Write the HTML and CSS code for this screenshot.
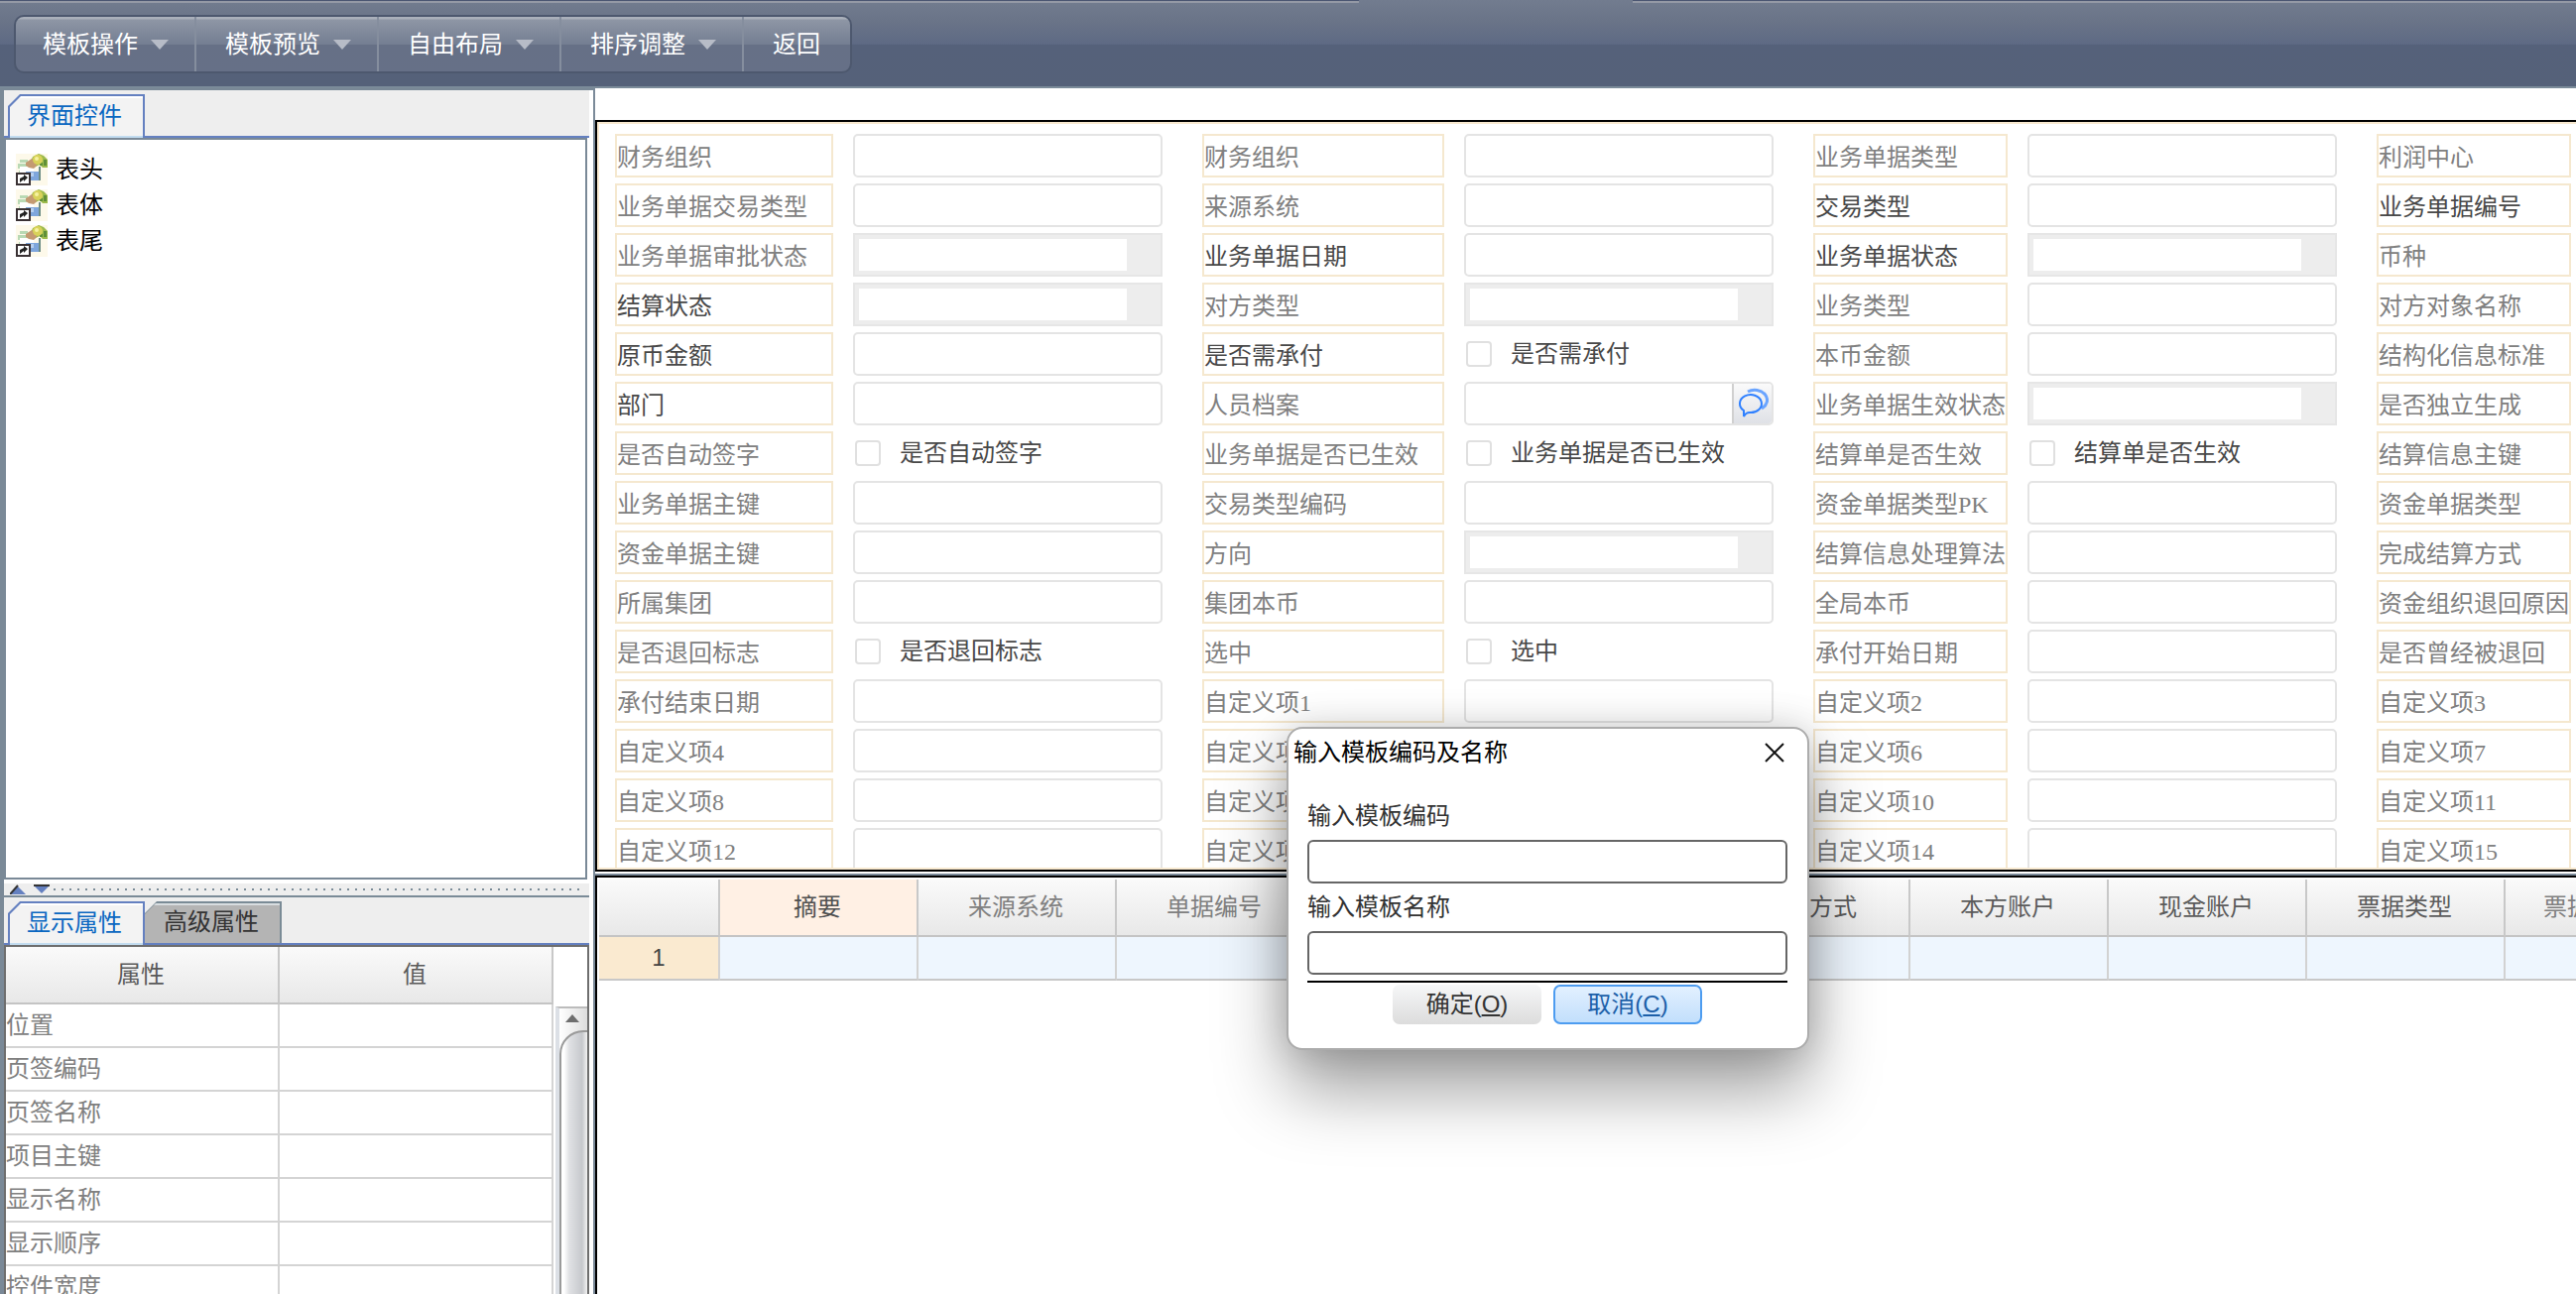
FILE: index.html
```
<!DOCTYPE html>
<html lang="zh-CN">
<head>
<meta charset="utf-8">
<title>模板设置</title>
<link rel="stylesheet" href="styles.css">
</head>
<body>
<svg width="0" height="0" class="sprite" aria-hidden="true">
  <symbol id="node" viewBox="0 0 32 32">
    <rect width="32" height="32" fill="#fdf9ea"/>
    <path d="M4 6h8v3H4zM2 10h10v5H2zM3 17h8v3H3z" fill="#b9d9b4"/>
    <path d="M4 13h14v6H4z" fill="#fff"/>
    <path d="M17 3l6-3 5 2 4 4v8h-5l-3-3-6 3-4-4z" fill="#9dbb4c"/>
    <path d="M28 6h3v6h-3zM24 9h3v3h-3z" fill="#5f8f38"/>
    <path d="M10 9l6-4 4 4 1 3-3 3-5-1-3-2z" fill="#c49a72"/>
    <circle cx="22" cy="6" r="5" fill="#d9d25a"/>
    <circle cx="21" cy="5" r="2" fill="#f6f3a0"/>
    <path d="M10 18h14v9H10z" fill="#7ea6dc"/>
    <path d="M11 19h7v4h-7z" fill="#b7d0f0"/>
    <path d="M24 13v14" stroke="#6d8d86" stroke-width="2"/>
    <path d="M1 20h13v11H1z" fill="#fff" stroke="#3a3234" stroke-width="2"/>
    <path d="M4 29v-4l4-2v-2l4 3-4 4v-2z" fill="#222"/>
  </symbol>
</svg>

<header class="topbar">
  <nav class="menu">
    <button type="button">模板操作<i class="caret"></i></button>
    <button type="button">模板预览<i class="caret"></i></button>
    <button type="button">自由布局<i class="caret"></i></button>
    <button type="button">排序调整<i class="caret"></i></button>
    <button type="button" class="back">返回</button>
  </nav>
</header>

<main class="workspace">
  <aside class="side">
    <section class="pane">
      <div class="tabs"><button type="button" class="tab active"><span>界面控件</span></button></div>
      <ul class="tree">
        <li><svg class="node"><use href="#node"/></svg>表头</li>
        <li><svg class="node"><use href="#node"/></svg>表体</li>
        <li><svg class="node"><use href="#node"/></svg>表尾</li>
      </ul>
    </section>
    <div class="splitter">
      <svg width="44" height="10" viewBox="0 0 44 10"><path d="M0 10l8-8 8 8z" fill="#6480c0"/><path d="M0 10l8-9" stroke="#333" stroke-width="2"/><path d="M24 1h16l-8 8z" fill="#6480c0"/><path d="M24 1h16" stroke="#333" stroke-width="2"/></svg>
      <span class="dots"></span>
    </div>
    <section class="pane lower">
      <div class="tabs"><button type="button" class="tab active"><span>显示属性</span></button><button type="button" class="tab idle"><span>高级属性</span></button></div>
      <div class="props">
        <table>
          <thead><tr><th>属性</th><th>值</th></tr></thead>
          <tbody>
            <tr><td>位置</td><td></td></tr>
            <tr><td>页签编码</td><td></td></tr>
            <tr><td>页签名称</td><td></td></tr>
            <tr><td>项目主键</td><td></td></tr>
            <tr><td>显示名称</td><td></td></tr>
            <tr><td>显示顺序</td><td></td></tr>
            <tr><td>控件宽度</td><td></td></tr>
          </tbody>
        </table>
        <div class="scroll"><svg width="28" height="22" viewBox="0 0 28 22"><path d="M6 14l7-8 7 8z" fill="#6e6e6e"/></svg><div class="thumb"></div></div>
      </div>
    </section>
  </aside>

  <div class="design">
    <form class="canvas">
      <div class="fields">
        <div class="pair"><label class="cap" for="a1">财务组织</label><input id="a1" type="text"></div>
        <div class="pair"><label class="cap" for="b1">财务组织</label><input id="b1" type="text"></div>
        <div class="pair"><label class="cap" for="c1">业务单据类型</label><input id="c1" type="text"></div>
        <span class="cap">利润中心</span>

        <div class="pair"><label class="cap" for="a2">业务单据交易类型</label><input id="a2" type="text"></div>
        <div class="pair"><label class="cap" for="b2">来源系统</label><input id="b2" type="text"></div>
        <div class="pair"><label class="cap key" for="c2">交易类型</label><input id="c2" type="text"></div>
        <span class="cap key">业务单据编号</span>

        <div class="pair"><label class="cap" for="a3">业务单据审批状态</label><select id="a3"></select></div>
        <div class="pair"><label class="cap key" for="b3">业务单据日期</label><input id="b3" type="text"></div>
        <div class="pair"><label class="cap key" for="c3">业务单据状态</label><select id="c3"></select></div>
        <span class="cap">币种</span>

        <div class="pair"><label class="cap key" for="a4">结算状态</label><select id="a4"></select></div>
        <div class="pair"><label class="cap" for="b4">对方类型</label><select id="b4"></select></div>
        <div class="pair"><label class="cap" for="c4">业务类型</label><input id="c4" type="text"></div>
        <span class="cap">对方对象名称</span>

        <div class="pair"><label class="cap key" for="a5">原币金额</label><input id="a5" type="text"></div>
        <div class="pair"><span class="cap key">是否需承付</span><label class="check"><input type="checkbox">是否需承付</label></div>
        <div class="pair"><label class="cap" for="c5">本币金额</label><input id="c5" type="text"></div>
        <span class="cap">结构化信息标准</span>

        <div class="pair"><label class="cap key" for="a6">部门</label><input id="a6" type="text"></div>
        <div class="pair"><label class="cap" for="b6">人员档案</label><div class="lookup"><input id="b6" type="text"><button type="button" aria-label="参照"><svg width="32" height="32" viewBox="0 0 32 32" fill="none" stroke="#2f80ff" stroke-width="2"><path d="M11 4a11 9 0 0 1 14 17" stroke="#6ba5ff" stroke-width="3"/><path d="M7 29v-6a11 9 0 1 1 6 2q-4 0-6 4z"/></svg></button></div></div>
        <div class="pair"><label class="cap" for="c6">业务单据生效状态</label><select id="c6"></select></div>
        <span class="cap">是否独立生成</span>

        <div class="pair"><span class="cap">是否自动签字</span><label class="check"><input type="checkbox">是否自动签字</label></div>
        <div class="pair"><span class="cap">业务单据是否已生效</span><label class="check"><input type="checkbox">业务单据是否已生效</label></div>
        <div class="pair"><span class="cap">结算单是否生效</span><label class="check"><input type="checkbox">结算单是否生效</label></div>
        <span class="cap">结算信息主键</span>

        <div class="pair"><label class="cap" for="a8">业务单据主键</label><input id="a8" type="text"></div>
        <div class="pair"><label class="cap" for="b8">交易类型编码</label><input id="b8" type="text"></div>
        <div class="pair"><label class="cap" for="c8">资金单据类型PK</label><input id="c8" type="text"></div>
        <span class="cap">资金单据类型</span>

        <div class="pair"><label class="cap" for="a9">资金单据主键</label><input id="a9" type="text"></div>
        <div class="pair"><label class="cap" for="b9">方向</label><select id="b9"></select></div>
        <div class="pair"><label class="cap" for="c9">结算信息处理算法</label><input id="c9" type="text"></div>
        <span class="cap">完成结算方式</span>

        <div class="pair"><label class="cap" for="a10">所属集团</label><input id="a10" type="text"></div>
        <div class="pair"><label class="cap" for="b10">集团本币</label><input id="b10" type="text"></div>
        <div class="pair"><label class="cap" for="c10">全局本币</label><input id="c10" type="text"></div>
        <span class="cap">资金组织退回原因</span>

        <div class="pair"><span class="cap">是否退回标志</span><label class="check"><input type="checkbox">是否退回标志</label></div>
        <div class="pair"><span class="cap">选中</span><label class="check"><input type="checkbox">选中</label></div>
        <div class="pair"><label class="cap" for="c11">承付开始日期</label><input id="c11" type="text"></div>
        <span class="cap">是否曾经被退回</span>

        <div class="pair"><label class="cap" for="a12">承付结束日期</label><input id="a12" type="text"></div>
        <div class="pair"><label class="cap" for="b12">自定义项1</label><input id="b12" type="text"></div>
        <div class="pair"><label class="cap" for="c12">自定义项2</label><input id="c12" type="text"></div>
        <span class="cap">自定义项3</span>

        <div class="pair"><label class="cap" for="a13">自定义项4</label><input id="a13" type="text"></div>
        <div class="pair"><label class="cap" for="b13">自定义项5</label><input id="b13" type="text"></div>
        <div class="pair"><label class="cap" for="c13">自定义项6</label><input id="c13" type="text"></div>
        <span class="cap">自定义项7</span>

        <div class="pair"><label class="cap" for="a14">自定义项8</label><input id="a14" type="text"></div>
        <div class="pair"><label class="cap" for="b14">自定义项9</label><input id="b14" type="text"></div>
        <div class="pair"><label class="cap" for="c14">自定义项10</label><input id="c14" type="text"></div>
        <span class="cap">自定义项11</span>

        <div class="pair"><label class="cap" for="a15">自定义项12</label><input id="a15" type="text"></div>
        <div class="pair"><label class="cap" for="b15">自定义项13</label><input id="b15" type="text"></div>
        <div class="pair"><label class="cap" for="c15">自定义项14</label><input id="c15" type="text"></div>
        <span class="cap">自定义项15</span>
      </div>
    </form>

    <section class="lines">
      <table>
        <thead><tr><th class="num"></th><th class="picked">摘要</th><th class="dim">来源系统</th><th class="dim">单据编号</th><th></th><th></th><th>结算方式</th><th>本方账户</th><th>现金账户</th><th>票据类型</th><th class="dim">票据到期日</th></tr></thead>
        <tbody><tr><td class="num">1</td><td></td><td></td><td></td><td></td><td></td><td></td><td></td><td></td><td></td><td></td></tr></tbody>
      </table>
    </section>
  </div>
</main>

<div class="dialog" role="dialog" aria-labelledby="dlg-title">
  <div class="dialog-head">
    <h1 id="dlg-title">输入模板编码及名称</h1>
    <button type="button" class="close" aria-label="关闭"><svg width="20" height="20" viewBox="0 0 20 20"><path d="M1 1l18 18M19 1L1 19" stroke="#111" stroke-width="2"/></svg></button>
  </div>
  <form class="dialog-body">
    <label for="code">输入模板编码</label>
    <input id="code" type="text">
    <label for="name">输入模板名称</label>
    <input id="name" type="text">
    <div class="actions">
      <button type="button">确定(<u>O</u>)</button>
      <button type="button" class="focus">取消(<u>C</u>)</button>
    </div>
  </form>
</div>
</body>
</html>
```
FILE: styles.css
```
* { box-sizing: border-box; }

html, body { height: 100%; }

body {
  margin: 0;
  display: flex;
  flex-direction: column;
  overflow: hidden;
  background: #fff;
  color: #4a4a4a;
  font: 24px/32px "Liberation Serif", "Noto Sans CJK SC", sans-serif;
}

button, input, select { margin: 0; padding: 0; font: inherit; color: inherit; border-radius: 0; }
button { border: 0; background: none; white-space: nowrap; }
.sprite { position: absolute; }

/* top bar */
.topbar {
  position: relative;
  flex: none;
  height: 89px;
  padding: 15px 14px;
  border-bottom: 2px solid #7b8b99;
  background: linear-gradient(#727c8f, #6a7488 24%, #5e6a84 51%, #55617a 52%, #556179);
}
.topbar::before, .topbar::after {
  content: "";
  position: absolute;
  top: 0;
  height: 3px;
  background: linear-gradient(#4b5672 0 1px, #9499a5 1px);
}
.topbar::before { left: 0; width: 1370px; }
.topbar::after { left: 1646px; right: 0; }

.menu {
  display: inline-flex;
  height: 59px;
  border: 2px solid #4d586e;
  border-radius: 10px;
  overflow: hidden;
  background: linear-gradient(#aab0bb 0 2px, #8e96a5 3px, #747e92 50%, #667086 51%, #667087);
}
.menu button {
  display: flex;
  align-items: center;
  gap: 13px;
  width: 184px;
  padding-left: 29px;
  color: #fff;
  border-right: 2px solid #858e9e;
}
.menu button:first-child { width: 182px; padding-left: 27px; }
.menu button.back { width: 107px; border-right: 0; }
.caret { border: 9px solid transparent; border-top: 10px solid #b7bcc7; border-bottom: 0; }

.workspace { flex: 1; min-height: 0; display: grid; grid-template-columns: 598px minmax(0, 1fr); }

/* left column */
.side {
  min-height: 0;
  display: grid;
  grid-template-columns: minmax(0, 1fr);
  grid-template-rows: minmax(0, 800fr) 14px minmax(0, 400fr);
  border-left: 4px solid #7a8997;
  border-top: 2px solid #7a8997;
}
.pane { display: flex; flex-direction: column; min-height: 0; margin-right: 4px; padding-bottom: 4px; }
.lower { padding-bottom: 0; }
.tabs {
  flex: none;
  display: flex;
  align-items: flex-end;
  height: 48px;
  padding-left: 4px;
  background: #eee;
  border-bottom: 2px solid #6480c0;
}
.tab {
  position: relative;
  width: 138px;
  height: 44px;
  margin-bottom: -2px;
  padding: 0 4px 0 0;
  color: #0a67c1;
  background: #6480c0;
  clip-path: polygon(12px 0, 100% 0, 100% 100%, 0 100%, 0 12px);
}
.tab::before {
  content: "";
  position: absolute;
  inset: 2px 2px 0 2px;
  background: linear-gradient(#fff 0 2px, #f3f3f3 2px 40px, #c2dcf0 40px);
  clip-path: polygon(11px 0, 100% 0, 100% 100%, 0 100%, 0 11px);
}
.tab span { position: relative; }
.tab.idle { margin-bottom: 0; height: 42px; color: #333; background: #7a8b96; }
.tab.idle::before { background: linear-gradient(#d8dde0 0 2px, #b4b4b4 2px); left: 0; }
.tree {
  flex: 1;
  margin: 0 2px 0 0;
  padding: 12px 10px;
  list-style: none;
  color: #000;
  border: 2px solid #7a8997;
}
.tree li { display: flex; align-items: center; gap: 8px; height: 36px; }
.node { width: 32px; height: 32px; }

.splitter { display: flex; align-items: center; margin-right: 4px; padding: 0 6px; background: #eee; border-bottom: 2px solid #7a8b97; }
.splitter svg { flex: none; }
.dots { flex: 1; height: 2px; background: repeating-linear-gradient(90deg, #7a8b97 0 2px, #eee 2px 8px); }

.props { flex: 1; display: flex; min-height: 0; overflow: hidden; border: 2px solid #6e6e6e; border-bottom: 0; }
table { border-collapse: separate; border-spacing: 0; table-layout: fixed; }
th, td { padding: 0; font-weight: normal; }
.props table { width: 552px; height: max-content; }
.props th {
  height: 58px;
  padding-right: 2px;
  color: #5a5a5a;
  border-right: 2px solid #c8c8c8;
  border-bottom: 2px solid #c4c4c4;
  background: linear-gradient(#fafafa, #e8e8e8);
}
.props td { height: 44px; color: #808080; border-right: 2px solid #d4d4d4; border-bottom: 2px solid #d4d4d4; }
.scroll {
  flex: 1;
  margin: 60px 0 0 2px;
  display: flex;
  flex-direction: column;
  border-top: 2px solid #bcbcbc;
  border-left: 4px solid #dce0e6;
  background: linear-gradient(90deg, #fff, #ddd);
}
.scroll svg { flex: none; }
.thumb { flex: 1; border: 2px solid #9a9a9a; border-right: 0; border-bottom: 0; border-top-left-radius: 24px; background: linear-gradient(90deg, #fff 0 10%, #e0e1e4 30%, #c6c8cc 80%, #f2f2f2); }

/* design area */
.design {
  min-height: 0;
  display: grid;
  grid-template-columns: minmax(0, 1fr);
  grid-template-rows: minmax(0, 758fr) 4px minmax(0, 422fr);
  padding-top: 32px;
  border-left: 2px solid #7b8a99;
}
.canvas { overflow: hidden; border: 2px solid #000; border-right: 0; }
.fields {
  height: 100%;
  display: grid;
  grid-template-columns: 552px 576px 528px 196px;
  grid-auto-rows: 44px;
  gap: 6px 40px;
  padding: 10px 0 0 16px;
  border: 2px solid #f8e9d0;
  border-right: 0;
  overflow: hidden;
}
.pair { display: grid; grid-template-columns: minmax(0, 1fr) 312px; gap: 20px; }
.cap { display: block; height: 44px; padding-top: 6px; border: 2px solid #f5e8cf; color: #808080; white-space: nowrap; }
.cap.key { color: #484848; }
.pair input[type="text"] { width: 100%; height: 44px; padding: 0 8px; border: 2px solid #e4e4e4; border-radius: 5px; background: #fff; }
select {
  appearance: none;
  height: 44px;
  border: 2px solid #e6e6e6;
  background: linear-gradient(#fff, #fff) 4px 4px / 270px 32px no-repeat #ededed;
}
.check { display: flex; align-items: center; gap: 19px; padding-left: 2px; color: #484848; white-space: nowrap; }
.check input { appearance: none; width: 26px; height: 26px; border: 2px solid #e0e0e0; border-radius: 4px; background: #fff; }
.lookup { display: flex; height: 44px; border: 2px solid #e4e4e4; border-radius: 5px; overflow: hidden; }
.lookup input[type="text"] { flex: 1; min-width: 0; height: 40px; border: 0; }
.lookup button { display: grid; place-items: center; width: 40px; border-left: 2px solid #d0d0d0; background: linear-gradient(#fafafa, #dfe1e6); }

.lines {
  grid-row: 3;
  position: relative;
  overflow: clip;
  padding: 2px 0 0 2px;
  border-top: 2px solid #000;
  border-left: 2px solid #000;
}
.design { background: linear-gradient(#7b8a99, #7b8a99) 0 792px / 100% 2px no-repeat; }
.lines table { width: 2122px; }
.lines th {
  width: 200px;
  height: 58px;
  padding-right: 2px;
  color: #5c5c5c;
  border-right: 2px solid #c8c8c8;
  border-bottom: 2px solid #c4c4c4;
  background: linear-gradient(#fafafa, #e8e8e8);
}
.lines td { height: 44px; background: #eef6fe; border-right: 2px solid #d2d2d2; border-bottom: 2px solid #c8c8c8; }
.lines th.num { width: 122px; }
.lines td.num { background: #faead0; text-align: center; color: #444; font-family: "Liberation Sans", sans-serif; }
.lines th.picked { background: #fff0e4; color: #505050; }
.lines th.dim { color: #808080; }

/* dialog floats above the designer */
.dialog {
  position: absolute;
  left: 1297px;
  top: 733px;
  width: 527px;
  padding: 6px 20px 24px 19px;
  border: 2px solid #acacac;
  border-radius: 16px;
  background: #fff;
  box-shadow: 0 40px 70px rgba(0, 0, 0, .38), 0 0 36px rgba(0, 0, 0, .16);
}
.dialog-head { display: flex; justify-content: space-between; align-items: center; height: 36px; margin-left: -14px; color: #000; }
.dialog-head h1 { margin: 0; font: inherit; }
.close { display: grid; margin-right: 3px; }
.dialog-body { display: flex; flex-direction: column; padding-top: 30px; color: #333; }
.dialog-body label { height: 40px; }
.dialog-body input { height: 44px; padding: 0 8px; border: 2px solid #666; border-radius: 6px; background: #fff; }
.dialog-body input + label { padding-top: 8px; height: 48px; }
.actions { display: flex; justify-content: center; gap: 12px; margin-top: 6px; padding-top: 2px; border-top: 2px solid #000; }
.actions button {
  width: 150px;
  height: 40px;
  border-radius: 7px;
  color: #333;
  font-family: "Liberation Sans", "Noto Sans CJK SC", sans-serif;
  background: linear-gradient(#f6f7f8, #dcdcdc);
}
.actions .focus { color: #1c5fa8; border: 2px solid #4d9cf0; background: linear-gradient(#e2f0ff, #c2dffc); }
```
